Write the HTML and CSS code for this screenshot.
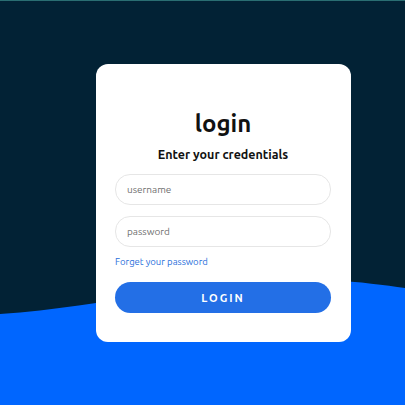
FILE: index.html
```html
<!DOCTYPE html>
<html>
<head>
<meta charset="utf-8">
<link rel="stylesheet" href="styles.css">
</head>
<body>
<div class="page">
  <svg class="wave" viewBox="0 0 405 405" preserveAspectRatio="none" width="405" height="405">
    <path d="M0,313 C120,305 220,272 330,279 C360,281 385,284 405,287 L405,405 L0,405 Z" fill="#0066ff"/>
  </svg>
  <main class="card">
    <h1 class="title">login</h1>
    <h2 class="subtitle">Enter your credentials</h2>
    <form class="form">
      <input class="field" type="text" placeholder="username">
      <input class="field field-last" type="password" placeholder="password">
      <a class="forgot" href="#">Forget your password</a>
      <button class="btn" type="button">LOGIN</button>
    </form>
  </main>
</div>
</body>
</html>
```
FILE: styles.css
```css
* { box-sizing: border-box; }
html, body { margin: 0; padding: 0; }
body {
  width: 405px;
  height: 405px;
  overflow: hidden;
  background: #022235;
  font-family: "Ubuntu", "Noto Sans", "Open Sans", sans-serif;
}
.page {
  position: relative;
  width: 405px;
  height: 405px;
  border-top: 1px solid #2a6e72;
  padding-top: 63px;
  padding-left: 96px;
}
.wave {
  position: absolute;
  left: 0;
  top: 0;
  display: block;
}
.card {
  position: relative;
  width: 255px;
  height: 278px;
  background: #fff;
  border-radius: 12px;
  padding: 45px 20px 0 19px;
  display: flex;
  flex-direction: column;
  align-items: center;
}
.title {
  margin: 0;
  font-size: 24px;
  line-height: 30px;
  font-weight: 700;
  color: #111;
}
.subtitle {
  margin: 6px 0 0;
  font-size: 12.5px;
  line-height: 18px;
  font-weight: 700;
  color: #111;
}
.form {
  width: 100%;
  margin-top: 11px;
  display: flex;
  flex-direction: column;
}
.field {
  width: 100%;
  height: 31px;
  border: 1px solid #e6e6e6;
  border-radius: 15px;
  padding: 0 11px;
  font-family: inherit;
  font-size: 10px;
  color: #333;
  outline: none;
  margin-bottom: 11px;
}
.field-last { margin-bottom: 9px; }
.field::placeholder { color: #707070; }
.forgot {
  font-size: 9.5px;
  line-height: 12px;
  color: #2a6fdb;
  text-decoration: none;
}
.btn {
  margin-top: 14px;
  width: 100%;
  height: 31px;
  border: none;
  border-radius: 16px;
  background: #236fe6;
  color: #fff;
  font-family: inherit;
  font-size: 11px;
  font-weight: 700;
  letter-spacing: 2px;
}
```
